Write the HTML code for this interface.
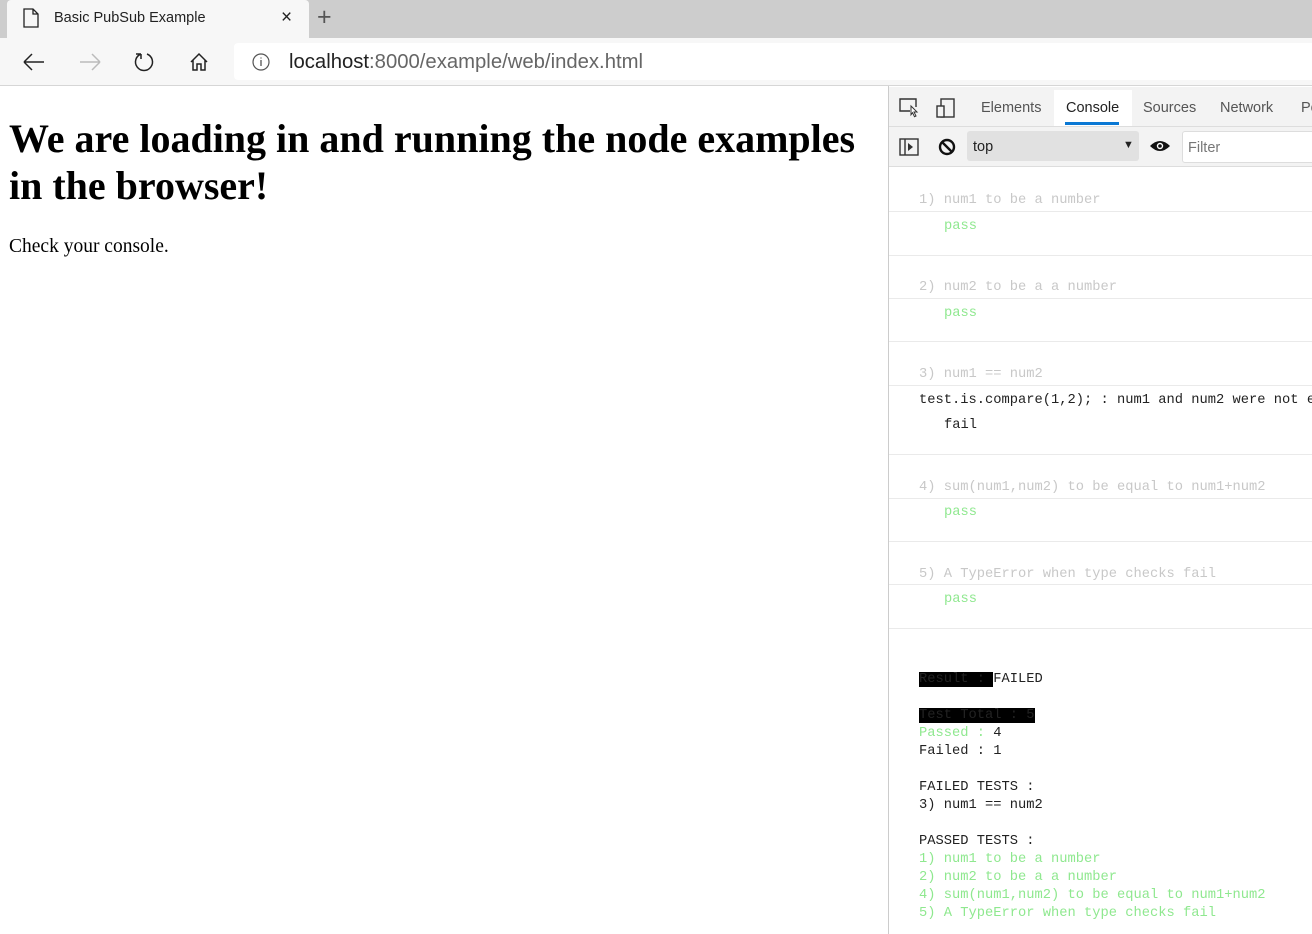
<!DOCTYPE html>
<html><head><meta charset="utf-8"><style>
*{margin:0;padding:0;box-sizing:border-box}
body{width:1312px;height:934px;overflow:hidden;background:#fff;position:relative;font-family:"Liberation Sans",sans-serif}
.a{position:absolute;white-space:nowrap}
.m{font-family:"Liberation Mono",monospace;font-size:13.75px;line-height:16px}
.g{color:#c8c8c8}.p{color:#8fe88f}.k{color:#222}
.sep{position:absolute;left:889px;right:0;height:1px;background:#eaeaea}
.blk{background:#000;color:#222}
</style></head><body>
<!-- tab strip -->
<div class="a" style="left:0;top:0;width:1312px;height:38px;background:#cdcdcd"></div>
<div class="a" style="left:7px;top:0;width:302px;height:38px;background:#f7f7f7;border-radius:4px 4px 0 0"></div>
<svg class="a" style="left:22px;top:8px" width="18" height="20" viewBox="0 0 18 20"><path d="M2 1h9l5 5v13H2z M11 1v5h5" fill="none" stroke="#222" stroke-width="1.3"/></svg>
<div class="a" style="left:54px;top:10px;font-size:14.5px;color:#222">Basic PubSub Example</div>
<div class="a" style="left:281px;top:7px;font-size:19px;color:#222">×</div>
<div class="a" style="left:317px;top:3px;font-size:25px;color:#555;font-weight:300">+</div>
<!-- nav bar -->
<div class="a" style="left:0;top:38px;width:1312px;height:48px;background:#f7f7f7;border-bottom:1px solid #d6d6d6"></div>
<svg class="a" style="left:22px;top:52px" width="24" height="20"><path d="M2 10h20M2 10l8-8M2 10l8 8" fill="none" stroke="#222" stroke-width="1.5"/></svg>
<svg class="a" style="left:78px;top:52px" width="24" height="20"><path d="M22 10H2M22 10l-8-8M22 10l-8 8" fill="none" stroke="#bbb" stroke-width="1.5"/></svg>
<svg class="a" style="left:133px;top:51px" width="22" height="22"><path d="M8 3A8.5 8.5 0 1 0 14 3M8 3v5M8 3H3" fill="none" stroke="#222" stroke-width="1.5"/></svg>
<svg class="a" style="left:189px;top:52px" width="20" height="20"><path d="M2 10L10 2l8 8M4 8v10h4v-6h4v6h4V8" fill="none" stroke="#222" stroke-width="1.5"/></svg>
<div class="a" style="left:234px;top:43px;width:1090px;height:37px;background:#fff;border-radius:4px"></div>
<svg class="a" style="left:251px;top:52px" width="20" height="20"><circle cx="10" cy="10" r="8" fill="none" stroke="#555" stroke-width="1.2"/><path d="M10 8v6M10 5.5v1" stroke="#555" stroke-width="1.3"/></svg>
<div class="a" style="left:289px;top:51px;font-size:20.3px;color:#222">localhost<span style="color:#666">:8000/example/web/index.html</span></div>
<!-- page -->
<div class="a" style="left:9px;top:115px;font-family:'Liberation Serif',serif;font-weight:bold;font-size:40px;line-height:47px;color:#000">We are loading in and running the node examples<br>in the browser!</div>
<div class="a" style="left:9px;top:236px;font-family:'Liberation Serif',serif;font-size:19.5px;color:#000">Check your console.</div>
<!-- devtools -->
<div class="a" style="left:888px;top:86px;width:1px;height:848px;background:#ccc"></div>
<div class="a" style="left:889px;top:87px;width:423px;height:40px;background:#f3f3f3;border-bottom:1px solid #ddd"></div>
<svg class="a" style="left:898px;top:97px" width="24" height="22"><path d="M12 14H2V2h16v8" fill="none" stroke="#333" stroke-width="1.4"/><path d="M13 9l6 6-3 0 2 4-1.5.7-2-4-1.5 2z" fill="#fff" stroke="#333" stroke-width="1"/></svg>
<svg class="a" style="left:935px;top:97px" width="22" height="22"><rect x="6" y="2" width="13" height="18" fill="none" stroke="#333" stroke-width="1.4"/><rect x="2" y="9" width="7" height="11" fill="#f3f3f3" stroke="#333" stroke-width="1.4"/></svg>
<div class="a" style="left:981px;top:100px;font-size:14.5px;color:#555">Elements</div>
<div class="a" style="left:1054px;top:90px;width:78px;height:36px;background:#fff"></div>
<div class="a" style="left:1066px;top:100px;font-size:14.5px;color:#222">Console</div>
<div class="a" style="left:1065px;top:122px;width:54px;height:3px;background:#0a78d4"></div>
<div class="a" style="left:1143px;top:100px;font-size:14.5px;color:#555">Sources</div>
<div class="a" style="left:1220px;top:100px;font-size:14.5px;color:#555">Network</div>
<div class="a" style="left:1301px;top:100px;font-size:14.5px;color:#555">Pe</div>
<div class="a" style="left:889px;top:127px;width:423px;height:40px;background:#f3f3f3;border-bottom:1px solid #ddd"></div>
<svg class="a" style="left:898px;top:137px" width="22" height="20"><rect x="2" y="2" width="18" height="16" fill="none" stroke="#333" stroke-width="1.4"/><path d="M7 2v16" stroke="#333" stroke-width="1.4"/><path d="M10 6l5 4-5 4z" fill="#333"/></svg>
<svg class="a" style="left:937px;top:137px" width="20" height="20"><circle cx="10" cy="10" r="7" fill="none" stroke="#111" stroke-width="2.4"/><path d="M5 5l10 10" stroke="#111" stroke-width="2.4"/></svg>
<div class="a" style="left:967px;top:131px;width:172px;height:30px;background:#e1e1e1;border-radius:3px"></div>
<div class="a" style="left:973px;top:139px;font-size:14.5px;color:#222">top</div>
<div class="a" style="left:1123px;top:139px;font-size:11px;color:#222">▼</div>
<svg class="a" style="left:1149px;top:138px" width="22" height="16"><path d="M1 8Q11-2 21 8Q11 18 1 8z" fill="#111"/><circle cx="11" cy="8" r="3.2" fill="#fff"/><circle cx="11" cy="8" r="1.8" fill="#111"/></svg>
<div class="a" style="left:1182px;top:131px;width:140px;height:32px;background:#fff;border:1px solid #ddd;border-radius:3px"></div>
<div class="a" style="left:1188px;top:140px;font-size:14.5px;color:#777">Filter</div>
<!-- console -->
<div class="a m g" style="left:919px;top:193px">1) num1 to be a number</div>
<div class="sep" style="top:211px"></div>
<div class="a m p" style="left:944px;top:219px">pass</div>
<div class="sep" style="top:255px"></div>
<div class="a m g" style="left:919px;top:280px">2) num2 to be a a number</div>
<div class="sep" style="top:298px"></div>
<div class="a m p" style="left:944px;top:306px">pass</div>
<div class="sep" style="top:341px"></div>
<div class="a m g" style="left:919px;top:367px">3) num1 == num2</div>
<div class="sep" style="top:385px"></div>
<div class="a m k" style="left:919px;top:393px">test.is.compare(1,2); : num1 and num2 were not e</div>
<div class="a m k" style="left:944px;top:418px">fail</div>
<div class="sep" style="top:454px"></div>
<div class="a m g" style="left:919px;top:480px">4) sum(num1,num2) to be equal to num1+num2</div>
<div class="sep" style="top:498px"></div>
<div class="a m p" style="left:944px;top:505px">pass</div>
<div class="sep" style="top:541px"></div>
<div class="a m g" style="left:919px;top:567px">5) A TypeError when type checks fail</div>
<div class="sep" style="top:584px"></div>
<div class="a m p" style="left:944px;top:592px">pass</div>
<div class="sep" style="top:628px"></div>
<div class="a m k" style="left:919px;top:671px;line-height:18px"><span class="blk">Result : </span>FAILED<br><br><span class="blk">Test Total : 5</span><br><span class="p">Passed : </span>4<br>Failed : 1<br><br>FAILED TESTS :<br>3) num1 == num2<br><br>PASSED TESTS :<br><span class="p">1) num1 to be a number<br>2) num2 to be a a number<br>4) sum(num1,num2) to be equal to num1+num2<br>5) A TypeError when type checks fail</span></div>
</body></html>
